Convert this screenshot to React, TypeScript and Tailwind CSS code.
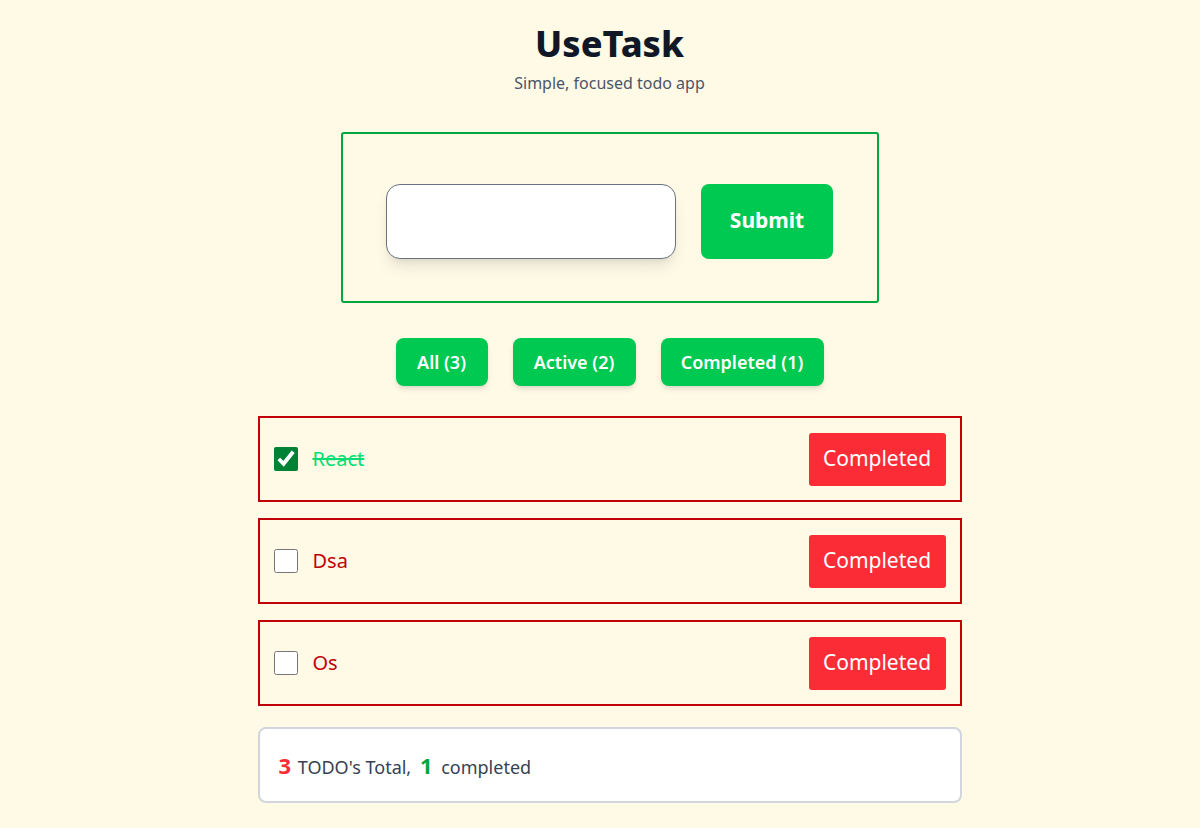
import { useState } from "react";

interface Todo {
  id: number;
  title: string;
  done: boolean;
}

const initialTodos: Todo[] = [
  { id: 1, title: "React", done: true },
  { id: 2, title: "Dsa", done: false },
  { id: 3, title: "Os", done: false },
];

export default function App() {
  const [todos, setTodos] = useState<Todo[]>(initialTodos);
  const [text, setText] = useState("");

  const total = todos.length;
  const completed = todos.filter((t) => t.done).length;

  const toggle = (id: number) =>
    setTodos((prev) => prev.map((t) => (t.id === id ? { ...t, done: !t.done } : t)));

  return (
    <div
      className="min-h-screen bg-[#fefae6] pl-[19px] text-gray-900"
      style={{ fontFamily: '"Noto Sans", "Open Sans", sans-serif' }}
    >
      <div className="flex flex-col items-center pt-[22px]">
        {/* Header */}
        <h1 className="text-[36px] leading-[44px] font-extrabold text-gray-900">UseTask</h1>
        <p className="mt-[5px] text-[16px] leading-6 text-gray-600">Simple, focused todo app</p>

        {/* New todo form */}
        <form
          className="mt-[37px] flex w-[538px] h-[171px] items-center justify-center gap-[25px] rounded-[3px] border-2 border-green-600 pt-[7px]"
          onSubmit={(e) => {
            e.preventDefault();
            if (!text.trim()) return;
            setTodos((prev) => [...prev, { id: Date.now(), title: text, done: false }]);
            setText("");
          }}
        >
          <input
            value={text}
            onChange={(e) => setText(e.target.value)}
            className="h-[75px] w-[290px] rounded-[14px] border border-gray-500 bg-white px-4 text-lg shadow-lg outline-none"
          />
          <button
            type="submit"
            className="h-[75px] w-[132px] rounded-lg bg-green-500 text-[21px] font-bold text-white"
          >
            Submit
          </button>
        </form>

        {/* Filters */}
        <div className="mt-[35px] flex gap-[25px]">
          <button className="h-12 w-[92px] rounded-lg bg-green-500 text-[18px] font-semibold text-white shadow-md">
            All ({total})
          </button>
          <button className="h-12 w-[123px] rounded-lg bg-green-500 text-[18px] font-semibold text-white shadow-md">
            Active ({total - completed})
          </button>
          <button className="h-12 w-[163px] rounded-lg bg-green-500 text-[18px] font-semibold text-white shadow-md">
            Completed ({completed})
          </button>
        </div>

        {/* Todo list */}
        <div className="mt-[30px] flex w-[704px] flex-col gap-4">
          {todos.map((todo) => (
            <div
              key={todo.id}
              className="flex h-[86px] items-center justify-between border-2 border-red-700 pl-[14px] pr-[14px]"
            >
              <label className="flex items-center gap-[15px]">
                <input
                  type="checkbox"
                  checked={todo.done}
                  onChange={() => toggle(todo.id)}
                  className="h-6 w-6 accent-green-700"
                />
                <span
                  className={
                    todo.done
                      ? "text-[20px] text-green-400 line-through"
                      : "text-[20px] text-red-700"
                  }
                >
                  {todo.title}
                </span>
              </label>
              <button className="h-[53px] w-[137px] rounded-[3px] bg-red-500 text-[21px] text-white">
                Completed
              </button>
            </div>
          ))}

          {/* Summary */}
          <div className="mt-[5px] flex h-[76px] items-center rounded-lg border-2 border-gray-300 bg-white px-[19px] pt-[1px]">
            <span className="text-[18px] text-gray-700">
              <span className="mr-[2px] text-[22px] font-bold text-red-500">{total}</span> TODO's
              Total,{" "}
              <span className="mx-[4px] text-[22px] font-bold text-green-600">{completed}</span>{" "}
              completed
            </span>
          </div>
        </div>
      </div>
    </div>
  );
}
